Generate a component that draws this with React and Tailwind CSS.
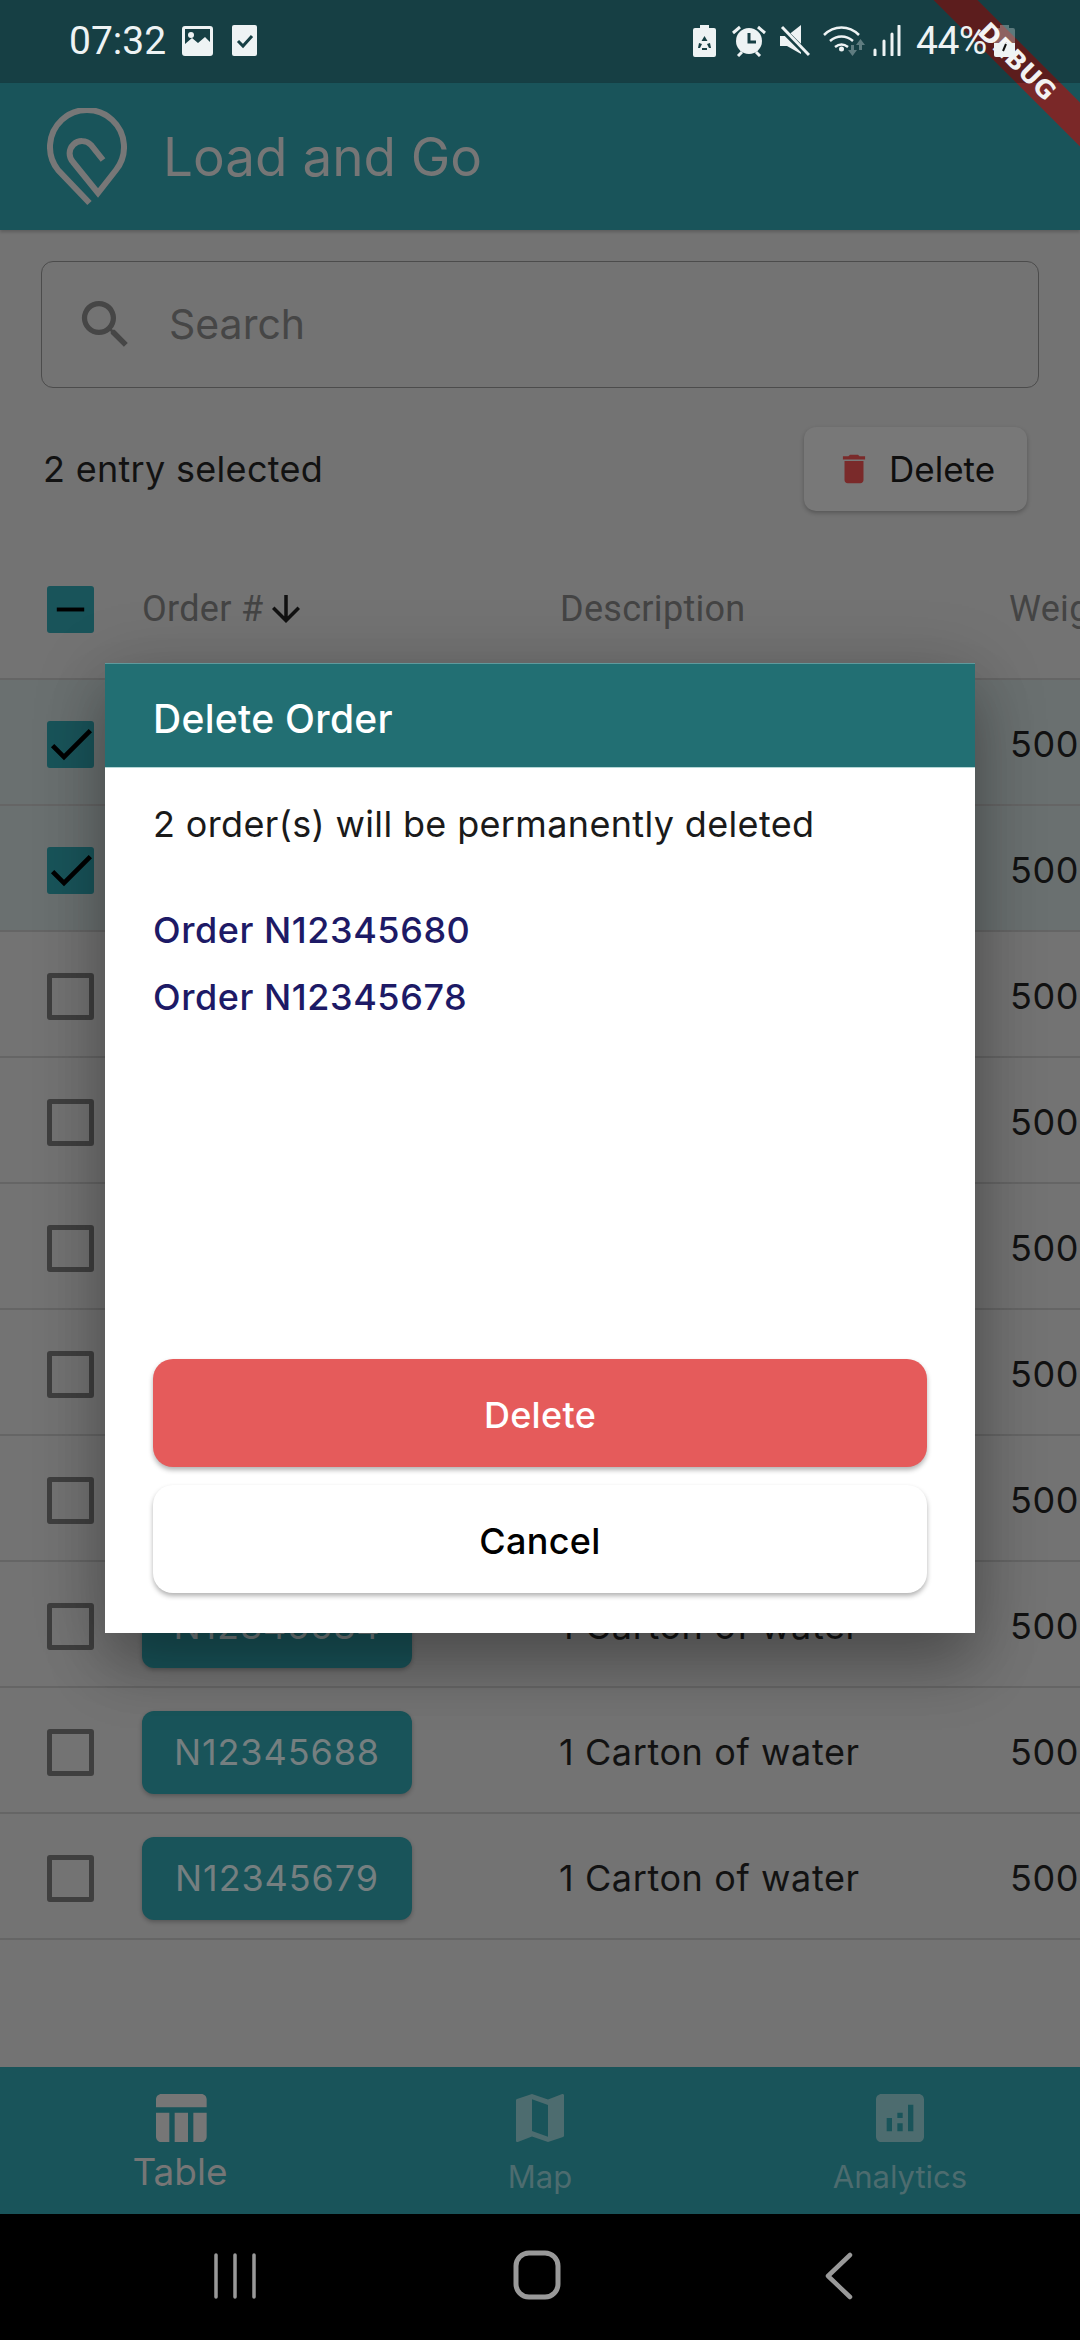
import { MdCheck, MdRemove, MdArrowDownward, MdDelete, MdSearch } from "react-icons/md";

const inter = "[font-family:Inter,sans-serif]";

const rows = [
  { id: "N12345680", checked: true },
  { id: "N12345678", checked: true },
  { id: "N12345681" },
  { id: "N12345682" },
  { id: "N12345683" },
  { id: "N12345685" },
  { id: "N12345686" },
  { id: "N12345684" },
  { id: "N12345688" },
  { id: "N12345679" },
];

function StatusBar() {
  return (
    <div className="h-[83px] bg-[#163f44] shrink-0">
      <div className="relative z-20 h-[83px] flex items-center text-[#eef3f4] [font-family:Roboto,sans-serif] text-[39px] leading-[46px] pb-[2px]">
        <span className="ml-[69px] w-[113px] shrink-0">07:32</span>
        {/* picture */}
        <svg className="shrink-0" width="31" height="30" viewBox="0 0 31 30">
          <path fillRule="evenodd" fill="#eef3f4" d="M3 0h25a3 3 0 0 1 3 3v24a3 3 0 0 1-3 3H3a3 3 0 0 1-3-3V3a3 3 0 0 1 3-3zM3 3v15l7-6 6 5 7-6 5 5V3z" />
          <circle cx="9" cy="9" r="3" fill="#eef3f4" />
        </svg>
        {/* checked note */}
        <svg className="ml-[19px] shrink-0" width="25" height="31" viewBox="0 0 25 31">
          <rect width="25" height="31" rx="2" fill="#eef3f4" />
          <path d="M6 16l5 5 9-10" fill="none" stroke="#163f44" strokeWidth="3" />
        </svg>
        {/* battery saver */}
        <svg className="ml-[436px] shrink-0" width="23" height="32" viewBox="0 0 23 32">
          <path d="M7 0h9v3h5a2 2 0 0 1 2 2v25a2 2 0 0 1-2 2H2a2 2 0 0 1-2-2V5a2 2 0 0 1 2-2h5z" fill="#eef3f4" />
          <path d="M11.500 11l3 5h-6zM6 18l3 1-2 4H5zM17 18l-3 1 2 4h2zM9 23h5v2H9z" fill="#163f44" />
        </svg>
        {/* alarm */}
        <svg className="ml-[16px] shrink-0" width="34" height="32" viewBox="0 0 34 32">
          <circle cx="17" cy="16" r="13" fill="#eef3f4" />
          <path d="M17 8v9h7" fill="none" stroke="#163f44" strokeWidth="3" />
          <path d="M1 8l7-6M33 8l-7-6M6 31l4-4M28 31l-4-4" stroke="#eef3f4" strokeWidth="3" />
        </svg>
        {/* muted speaker */}
        <svg className="ml-[14px] shrink-0" width="30" height="32" viewBox="0 0 30 32">
          <path d="M0 11h7L21 0v29L7 21H0z" fill="#eef3f4" />
          <path d="M1 3l27 27" stroke="#163f44" strokeWidth="6" />
          <path d="M2 2l27 28" stroke="#eef3f4" strokeWidth="3" />
        </svg>
        {/* wifi */}
        <svg className="ml-[13px] shrink-0" width="42" height="32" viewBox="0 0 42 32">
          <path d="M1 10c10-10 25-10 35 0M7 16c7-6 16-6 23 0M12 22c4-3 9-3 13 0" fill="none" stroke="#eef3f4" strokeWidth="2.500" />
          <circle cx="18.500" cy="24" r="2.500" fill="#eef3f4" />
          <path d="M25 25h3v-5h3v5h3l-4.500 6zM33 20h3v5h3v-5h3l-4.500-6z" fill="#5f7c80" />
        </svg>
        {/* signal */}
        <svg className="ml-[8px] shrink-0" width="28" height="31" viewBox="0 0 28 31">
          <path d="M2 25v5M11 16v14M19 9v21M26 1v29" stroke="#eef3f4" strokeWidth="3" strokeLinecap="round" />
        </svg>
        <span className="ml-[15px] tracking-[-0.5px] shrink-0">44%</span>
        {/* battery, drawn over the debug banner */}
        <svg className="ml-[7px] shrink-0" width="21" height="32" viewBox="0 0 21 32">
          <path d="M6 0h9v3h4a2 2 0 0 1 2 2v13H0V5a2 2 0 0 1 2-2h4z" fill="#ffffff" fillOpacity="0.3" />
          <path d="M0 18h21v12a2 2 0 0 1-2 2H2a2 2 0 0 1-2-2z" fill="#eef3f4" />
          <path d="M12 19l-3 7" stroke="#111111" strokeWidth="2" />
        </svg>
      </div>
    </div>
  );
}

function AppBar() {
  return (
    <div className="h-[147px] shrink-0 bg-[#19545a] flex items-center pl-[47px] shadow-[0_2px_3px_rgba(0,0,0,0.2)]">
      <svg width="80" height="98" viewBox="0 0 80 98" fill="none" stroke="#777777" strokeWidth="6">
        <path d="M42.500 95L11 62A37 37 0 1 1 69 62L51 85L26 54A12 12 0 0 1 44 37L56 52" />
      </svg>
      <span className={`${inter} ml-[36px] text-[#767676] text-[53px] leading-[56px]`}>Load and Go</span>
    </div>
  );
}

function Checkbox({ checked }) {
  if (checked) {
    return (
      <div className="w-[47px] h-[47px] rounded-[3px] bg-[#19545a] flex items-center justify-center">
        <MdCheck size={56} color="#000000" className="shrink-0" />
      </div>
    );
  }
  return <div className="w-[47px] h-[47px] rounded-[3px] border-[5px] border-[#3f3f3f]" />;
}

function TableRow({ id, checked }) {
  return (
    <div className={`h-[126px] shrink-0 flex items-center pt-[4px] border-b-2 border-[#656565] ${checked ? "bg-[#6a7070]" : ""}`}>
      <div className="w-[142px] shrink-0 pl-[47px]">
        <Checkbox checked={checked} />
      </div>
      <div className="w-[417px] shrink-0">
        <div className="w-[270px] h-[83px] rounded-[12px] bg-[#19545a] flex items-center justify-center text-[#757f80] text-[36px] tracking-[0.9px] shadow-[0_2px_4px_rgba(0,0,0,0.25)]">
          {id}
        </div>
      </div>
      <div className="w-[451px] shrink-0 text-[36px] tracking-[0.6px] text-[#121212]">1 Carton of water</div>
      <div className="shrink-0 text-[36px] tracking-[0.6px] text-[#121212]">500g</div>
    </div>
  );
}

function DeleteDialog() {
  return (
    <div className={`${inter} absolute z-0 left-[105px] top-[663px] w-[870px] h-[970px] bg-white flex flex-col shadow-[0_36px_56px_rgba(0,0,0,0.22),0_10px_70px_rgba(0,0,0,0.2)]`}>
      <div className="h-[105px] bg-[#226f73] border-t border-[#5f9a9d] border-b border-b-[#b4d6d6] flex items-center pl-[48px] pt-[7px] text-white text-[39px] tracking-[0.3px] font-[450]">
        Delete Order
      </div>
      <div className="flex-1 flex flex-col px-[48px] pb-[40px]">
        <p className="mt-[34px] text-[36px] leading-[44px] tracking-[0.35px] text-[#1a1a1a]">2 order(s) will be permanently deleted</p>
        <p className="mt-[62px] text-[36px] leading-[44px] tracking-[0.55px] text-[#1d1a66] font-[450]">Order N12345680</p>
        <p className="mt-[23px] text-[36px] leading-[44px] tracking-[0.55px] text-[#1d1a66] font-[450]">Order N12345678</p>
        <div className="mt-auto flex flex-col gap-[18px]">
          <button className="h-[108px] pt-[3px] rounded-[20px] bg-[#e55b5b] text-white text-[36px] tracking-[0.3px] font-[450] shadow-[0_3px_5px_rgba(0,0,0,0.3)]">
            Delete
          </button>
          <button className="h-[108px] pt-[3px] rounded-[20px] bg-white text-black text-[36px] tracking-[0.3px] font-[450] shadow-[0_3px_5px_rgba(0,0,0,0.3)]">
            Cancel
          </button>
        </div>
      </div>
    </div>
  );
}

function BottomNav() {
  return (
    <div className={`${inter} h-[147px] shrink-0 bg-[#19545a] flex`}>
      <div className="flex-1 flex flex-col items-center pt-[19px]">
        <svg width="64" height="64" viewBox="0 0 24 24" fill="#767676">
          <path d="M10 10.020h5V21h-5zM17 21h3c1.100 0 2-.9 2-2v-9h-5v11zm3-18H5c-1.100 0-2 .9-2 2v3h19V5c0-1.100-.9-2-2-2zM3 19c0 1.100.9 2 2 2h3V10H3v9z" />
        </svg>
        <span className="text-[37px] leading-[40px] text-[#767676] mt-[2px]">Table</span>
      </div>
      <div className="flex-1 flex flex-col items-center pt-[19px]">
        <svg width="64" height="64" viewBox="0 0 24 24" fill="#4d6c6f">
          <path d="M20.500 3l-.16.030L15 5.100 9 3 3.360 4.900c-.21.070-.36.250-.36.480V20.500c0 .280.220.5.5.5l.160-.030L9 18.900l6 2.100 5.640-1.900c.210-.070.360-.250.360-.480V3.500c0-.280-.220-.5-.5-.5zM15 19l-6-2.110V5l6 2.110V19z" />
        </svg>
        <span className="text-[31px] leading-[40px] text-[#4d6c6f] mt-[7px]">Map</span>
      </div>
      <div className="flex-1 flex flex-col items-center pt-[19px]">
        <svg width="64" height="64" viewBox="0 0 24 24" fill="#4d6c6f">
          <path d="M19 3H5c-1.100 0-2 .9-2 2v14c0 1.100.9 2 2 2h14c1.100 0 2-.9 2-2V5c0-1.100-.9-2-2-2zM9 17H7v-5h2v5zm4 0h-2v-3h2v3zm0-5h-2v-2h2v2zm4 5h-2V7h2v10z" />
        </svg>
        <span className="text-[31px] leading-[40px] text-[#4d6c6f] mt-[7px]">Analytics</span>
      </div>
    </div>
  );
}

function SystemNav() {
  return (
    <div className="h-[126px] shrink-0 bg-black flex items-center justify-center">
      <svg width="1080" height="126" viewBox="0 0 1080 126" fill="none" stroke="#999999" strokeLinecap="round" strokeLinejoin="round">
        <path d="M216 41v42M235 41v42M254 41v42" strokeWidth="3.500" />
        <rect x="516" y="39" width="42" height="44" rx="13" strokeWidth="5" />
        <path d="M850 41L828 62L850 83" strokeWidth="4.500" />
      </svg>
    </div>
  );
}

export default function App() {
  return (
    <div className="relative w-[1080px] h-[2340px] overflow-hidden flex flex-col bg-[#737373]">
      <StatusBar />
      <AppBar />

      <div className={`${inter} flex-1 min-h-0 overflow-hidden flex flex-col`}>
        {/* search */}
        <div className="mt-[31px] mx-[41px] h-[127px] shrink-0 rounded-[12px] border border-[#4c4c4c] flex items-center pl-[32px] gap-[32px]">
          <MdSearch size={63} color="#464646" />
          <span className="text-[41px] text-[#464646]">Search</span>
        </div>

        {/* selection */}
        <div className="mt-[39px] h-[84px] shrink-0 flex items-center justify-between pl-[43px] pr-[53px]">
          <span className="text-[36px] text-[#121212] tracking-[0.3px]">2 entry selected</span>
          <div className="w-[223px] h-[84px] rounded-[12px] bg-[#787878] flex items-center pl-[31px] gap-[16px] shadow-[0_2px_4px_rgba(0,0,0,0.25)]">
            <MdDelete size={38} color="#7a2a2a" />
            <span className="text-[35px] text-[#0e0e0e]">Delete</span>
          </div>
        </div>

        {/* header */}
        <div className="h-[169px] shrink-0 flex items-center border-b-2 border-[#656565] pt-[29px] [font-family:Roboto,sans-serif] text-[36px] tracking-[0.3px] text-[#444444]">
          <div className="w-[142px] shrink-0 pl-[47px]">
            <div className="w-[47px] h-[47px] rounded-[3px] bg-[#19545a] flex items-center justify-center">
              <MdRemove size={47} color="#000000" />
            </div>
          </div>
          <div className="w-[418px] shrink-0 flex items-center gap-[2px]">
            <span>Order #</span>
            <MdArrowDownward size={42} color="#111111" />
          </div>
          <div className="w-[449px] shrink-0">Description</div>
          <div className="shrink-0">Weight</div>
        </div>

        {rows.map((r) => (
          <TableRow key={r.id} id={r.id} checked={r.checked} />
        ))}
      </div>

      <BottomNav />
      <SystemNav />

      <DeleteDialog />

      {/* debug banner */}
      <div className="absolute z-10 left-[817px] top-[46px] w-[400px] h-[31px] rotate-45 bg-[linear-gradient(135deg,#5c1d1d_57%,#7a2828_57%)] flex items-center justify-center [font-family:'DejaVu_Sans',sans-serif] font-bold text-[25px] text-[#f2f2f2]">
        DEBUG
      </div>
    </div>
  );
}
